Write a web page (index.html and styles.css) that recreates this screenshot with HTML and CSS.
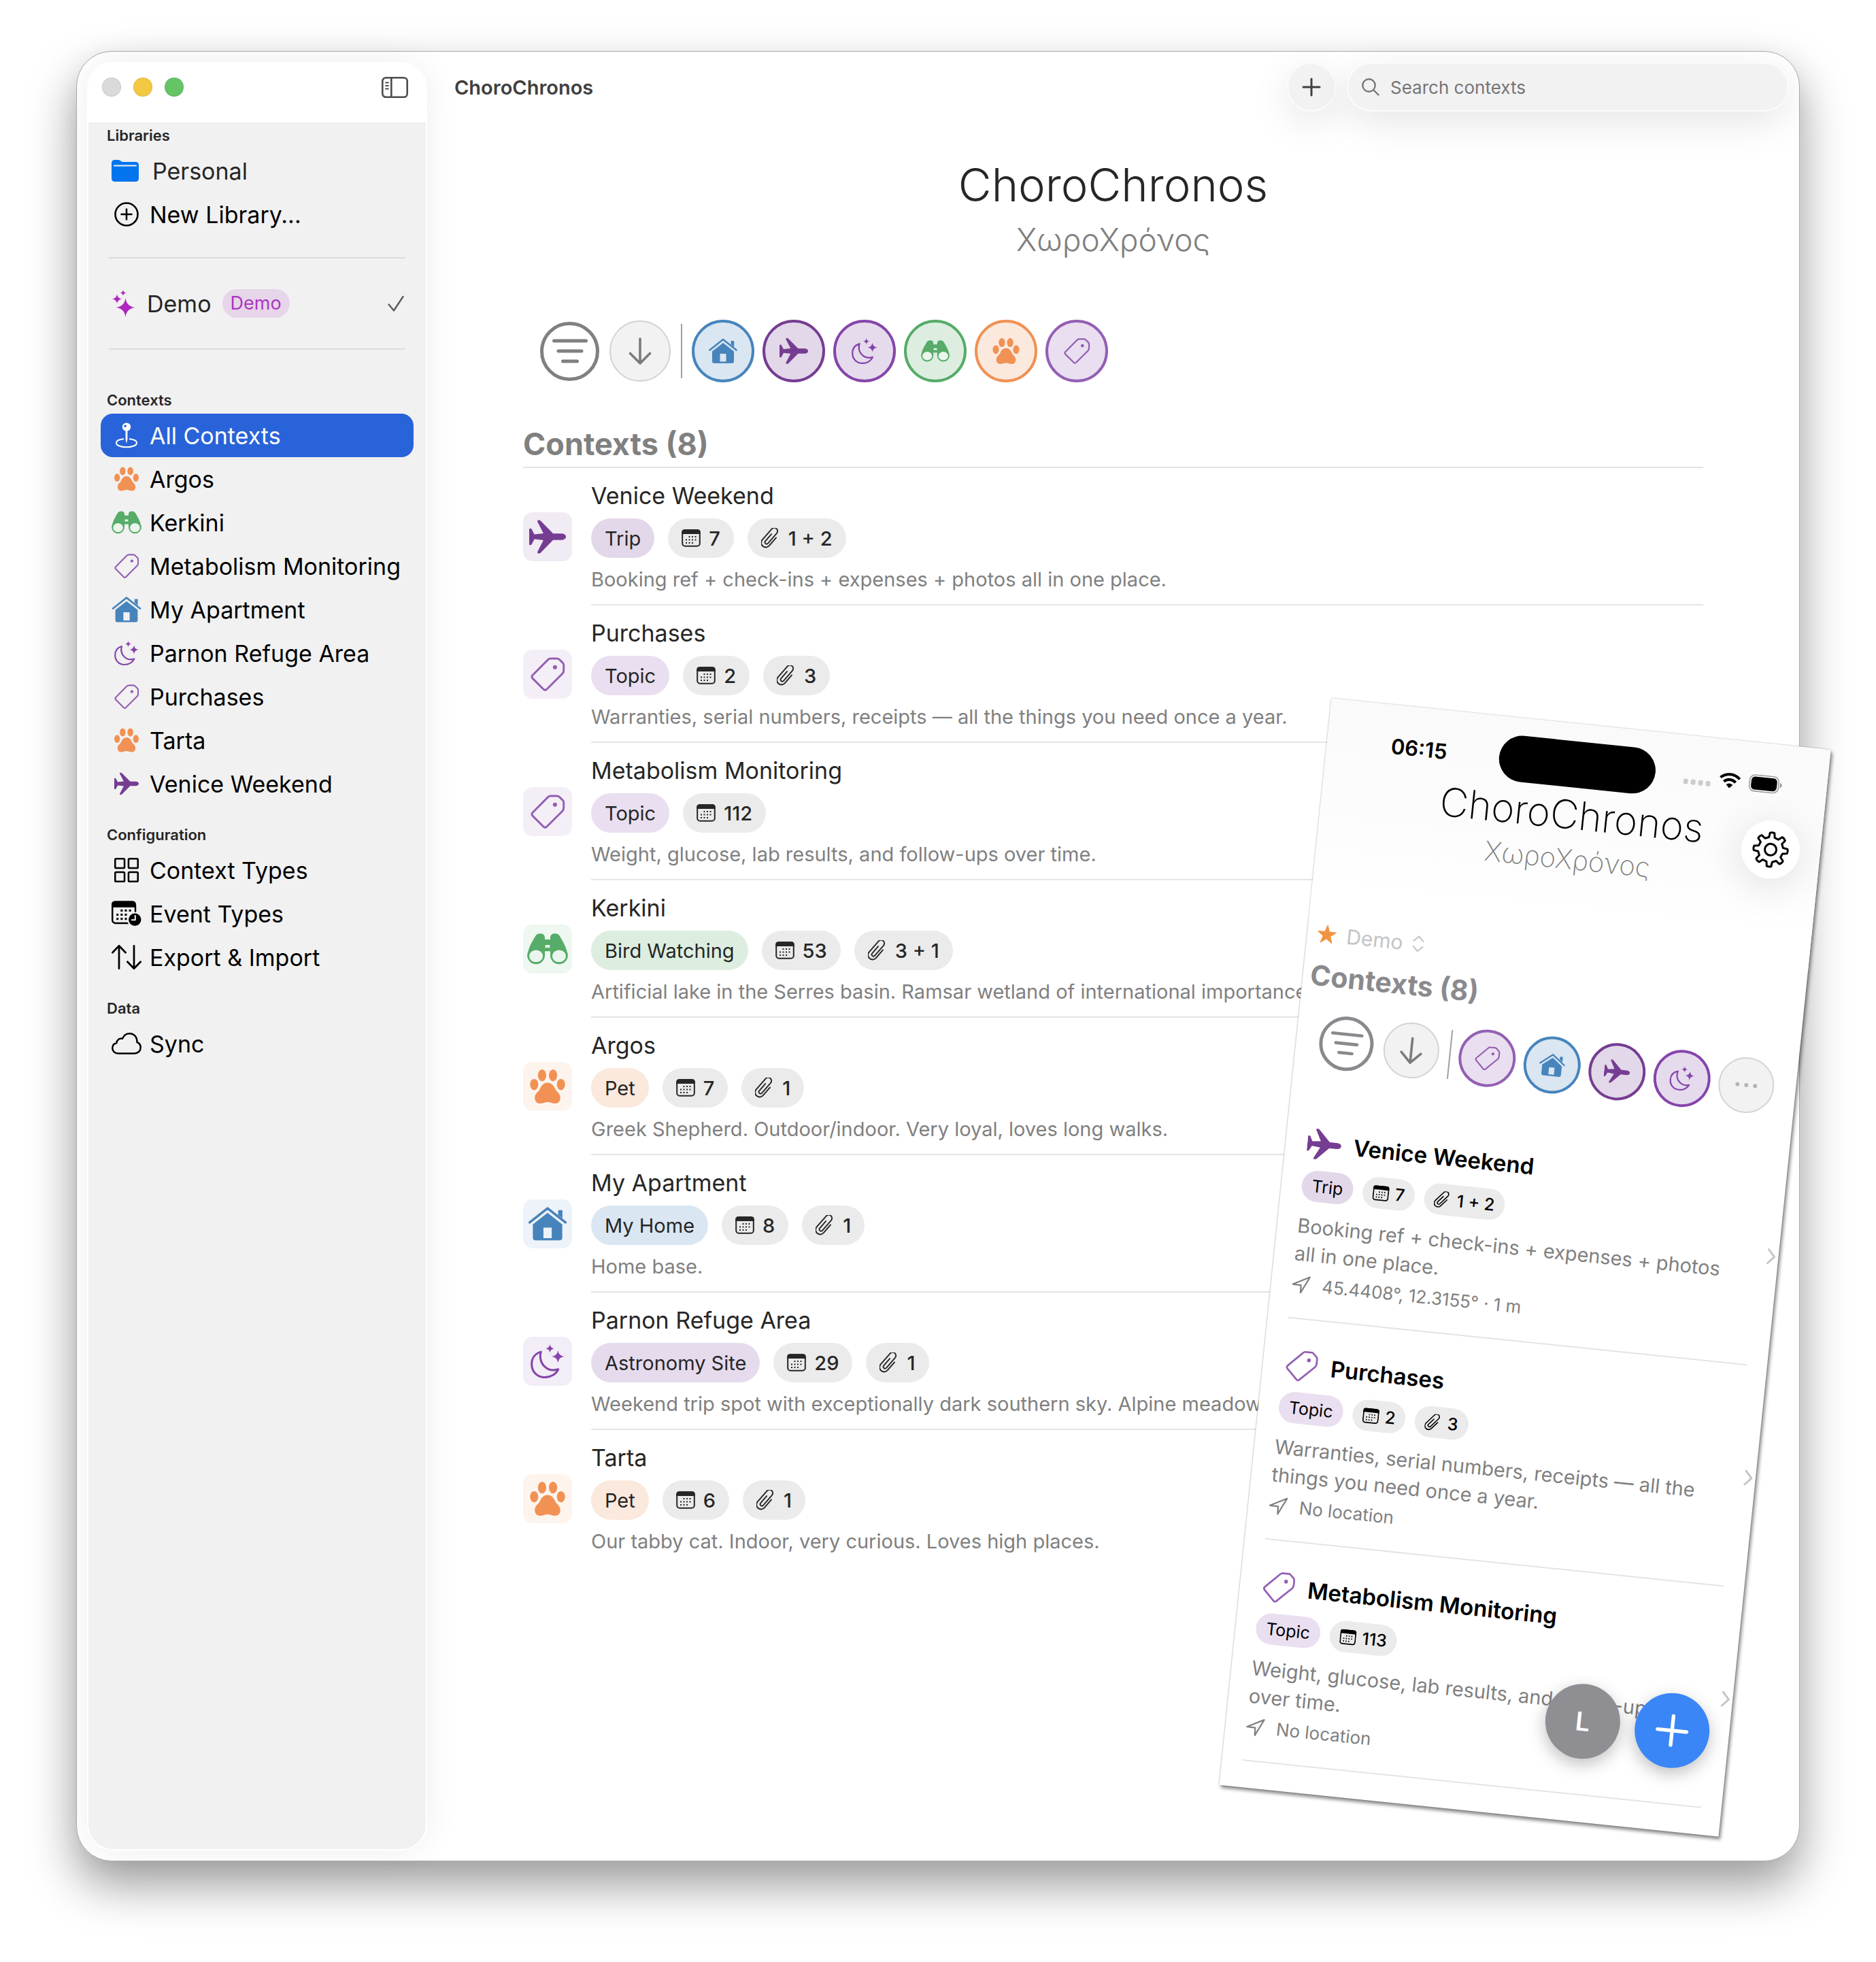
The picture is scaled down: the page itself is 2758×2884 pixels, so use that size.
FILE: index.html
```
<!DOCTYPE html>
<html lang="en">
<head>
    <meta charset="UTF-8">
    <meta name="viewport" content="width=device-width, initial-scale=1.0">
    <title>ChoroChronos</title>
    <link rel="stylesheet" href="styles.css">
</head>
<body>
    <!-- icon set -->
    <svg class="sprite" aria-hidden="true">
        <symbol id="paw" viewBox="0 0 37 36">
            <g fill="currentColor">
                <ellipse cx="4.300" cy="16" rx="4.300" ry="6"/>
                <ellipse cx="12.700" cy="6.200" rx="4.400" ry="6.200"/>
                <ellipse cx="24.300" cy="6.200" rx="4.400" ry="6.200"/>
                <ellipse cx="32.700" cy="16" rx="4.300" ry="6"/>
                <path d="M18.500 14c-4 0-6.500 3-8 6.500C9 24 5 25 5 30c0 4 2.500 6 5.800 6 3 0 4.500-1.500 7.700-1.500s4.700 1.500 7.700 1.500c3.300 0 5.800-2 5.800-6 0-5-4-6-5.500-9.500-1.500-3.500-4-6.500-8-6.500z"/>
            </g>
        </symbol>
        <symbol id="binoculars" viewBox="0 0 45 34">
            <path fill="currentColor" d="M1 20C2.500 14 6 8 9 3c1-2 3-3 5.500-3 3.500 0 5 2 5 4.500v2h6v-2C25.500 2 27 0 30.500 0 33 0 35 1 36 3c3 5 6.500 11 8 17 .6 1.500.9 2.500.9 4a9.700 9.700 0 0 1-19.400 0v-4.500h-6V24A9.700 9.700 0 0 1 .1 24c0-1.500.3-2.500.9-4z"/>
            <g fill="#fff">
                <ellipse cx="9.800" cy="24.800" rx="7.500" ry="6.700" opacity=".88"/>
                <ellipse cx="35.200" cy="24.800" rx="7.500" ry="6.700" opacity=".88"/>
                <path d="M20 12.500h5v3.500q-2.500-1.500-5 0z" opacity=".88"/>
            </g>
        </symbol>
        <symbol id="tag" viewBox="0 0 39 39">
            <path fill="none" stroke="currentColor" stroke-width="2.300" d="M2.500 24.500Q.5 22.500 2.500 20.500L19.800 3Q21.300 1.500 23 1.500h7q1.700 0 2.800 1L36.800 6.300Q38 7.500 38 9v6q0 2.300-1.500 4L18.300 37q-1.600 1.500-3.200 0z"/>
            <circle cx="28" cy="11.500" r="2.400" fill="currentColor"/>
        </symbol>
        <symbol id="house" viewBox="0 0 42 37">
            <path fill="none" stroke="currentColor" stroke-width="2.600" stroke-linecap="round" stroke-linejoin="round" d="M1.500 17 21 1.600 40.500 17"/>
            <path fill="currentColor" d="M32.500 4.500q0-1 1-1h2.700q1 0 1 1v8l-4.700-3.700z"/>
            <path fill="currentColor" fill-rule="evenodd" d="M21 6.500 37 19v14.500q0 3-3 3H8q-3 0-3-3V19zM16.500 22.500V34h9V22.500z"/>
        </symbol>
        <symbol id="moon" viewBox="0 0 36 36">
            <path fill="none" stroke="currentColor" stroke-width="2.200" stroke-linejoin="round" d="M11 8C4 10 1.200 15.500 1.200 21 1.200 29 7 35 15 35c6.500 0 12-3.500 14.300-8.500-4.800 1.500-10.300 1-14.300-2.800C10.300 19.300 9.500 13 11 8z"/>
            <path fill="currentColor" d="M20.500 0q.5 4 4.500 4.500-4 .5-4.500 4.500-.5-4-4.500-4.500 4-.5 4.500-4.500zM29 6.500q.8 5.700 6.500 6.500-5.700.8-6.500 6.500-.8-5.700-6.500-6.500 5.700-.8 6.500-6.500z"/>
        </symbol>
        <symbol id="plane" viewBox="0 0 53 48">
            <path fill="currentColor" d="M53 24c0-3-3-4.700-7-4.700H34.500L17 1.500C16 .5 15 0 13.500 0 12 0 11.500 1 12 2.500L20.500 19 7.500 20.500 3.500 13Q3 12 1.500 12 0 12 0 13.500v21Q0 36 1.500 36q1.500 0 2-1l4-7.500 13 1.500L12 45.500c-.5 1.500 0 2.500 1.500 2.500 1.500 0 2.500-.5 3.500-1.500l17.500-17.800H46c4 0 7-1.700 7-4.700z"/>
        </symbol>
        <symbol id="pin" viewBox="0 0 34 40">
            <circle cx="17" cy="7" r="6.500" fill="currentColor"/>
            <circle cx="15" cy="5.500" r="1.900" fill="#2963d9"/>
            <path fill="currentColor" d="M15.500 12h3v14l-1.500 7-1.500-7z"/>
            <path fill="none" stroke="currentColor" stroke-width="2.200" stroke-linecap="round" d="M12 25.500C5 26.300 1.200 28.500 1.200 31.500c0 4 7 6.700 15.800 6.700s15.800-2.700 15.800-6.700c0-3-3.800-5.200-10.800-6"/>
        </symbol>
        <symbol id="folder" viewBox="0 0 40 32">
            <path fill="currentColor" d="M0 5q0-5 5-5h5q2 0 3.500 1.500L15.500 3H35q5 0 5 5v19q0 5-5 5H5q-5 0-5-5z"/>
            <path stroke="#f1f1f1" stroke-width="2.200" stroke-linecap="round" d="M4 8.500h32"/>
        </symbol>
        <symbol id="plus-circle" viewBox="0 0 36 36">
            <g fill="none" stroke="currentColor" stroke-width="2.600" stroke-linecap="round"><circle cx="18" cy="18" r="16.500"/><path d="M18 10.500v15M10.500 18h15"/></g>
        </symbol>
        <symbol id="sparkles" viewBox="0 0 33 40">
            <path fill="currentColor" d="M19 12q1.500 12.500 14 14-12.500 1.500-14 14-1.500-12.500-14-14 12.500-1.500 14-14zM6.500 6.500q.8 6.200 7 7-6.200.8-7 7-.8-6.200-7-7 6.200-.8 7-7zM15.500 0q.5 4 4.500 4.500-4 .5-4.500 4.500-.5-4-4.500-4.500 4-.5 4.500-4.500z"/>
        </symbol>
        <symbol id="check" viewBox="0 0 24 24">
            <path fill="none" stroke="currentColor" stroke-width="2.400" stroke-linecap="round" stroke-linejoin="round" d="M1.500 13.500 9 22.500 22.500 2"/>
        </symbol>
        <symbol id="sidebar-toggle" viewBox="0 0 39 31">
            <g fill="none" stroke="currentColor" stroke-width="2.600"><rect x="1.300" y="1.300" width="36.400" height="28.400" rx="5"/><path d="M14.300 1v29"/></g>
            <path stroke="currentColor" stroke-width="1.800" stroke-linecap="round" d="M6 8.500h4M6 13h4M6 17.500h4"/>
        </symbol>
        <symbol id="grid" viewBox="0 0 34 34">
            <g fill="none" stroke="currentColor" stroke-width="2.400"><rect x="1.200" y="1.200" width="13" height="13" rx="1.500"/><rect x="19.800" y="1.200" width="13" height="13" rx="1.500"/><rect x="1.200" y="19.800" width="13" height="13" rx="1.500"/><rect x="19.800" y="19.800" width="13" height="13" rx="1.500"/></g>
        </symbol>
        <symbol id="calendar-clock" viewBox="0 0 43 36">
            <rect x="1.200" y="1.200" width="33" height="30.500" rx="4.500" fill="none" stroke="currentColor" stroke-width="2.400"/>
            <path fill="currentColor" d="M0 9V5q0-5 5-5h25q5 0 5 5v4z"/>
            <g fill="currentColor"><rect x="13" y="12" width="3" height="3"/><rect x="19" y="12" width="3" height="3"/><rect x="25" y="12" width="3" height="3"/><rect x="7" y="18" width="3" height="3"/><rect x="13" y="18" width="3" height="3"/><rect x="19" y="18" width="3" height="3"/><rect x="7" y="24" width="3" height="3"/><rect x="13" y="24" width="3" height="3"/><rect x="19" y="24" width="3" height="3"/></g>
            <circle cx="33.500" cy="26.500" r="10" fill="currentColor" stroke="#f1f1f1" stroke-width="2"/>
            <path fill="none" stroke="#f1f1f1" stroke-width="2" stroke-linecap="round" stroke-linejoin="round" d="M34 21v6h-5"/>
        </symbol>
        <symbol id="arrows" viewBox="0 0 42 35">
            <path fill="none" stroke="currentColor" stroke-width="2.600" stroke-linecap="round" stroke-linejoin="round" d="M10.500 33.500v-32M1.300 11l9.200-9.500 9.200 9.500M31.500 1.500v32M22.300 24l9.200 9.500 9.200-9.500"/>
        </symbol>
        <symbol id="cloud" viewBox="0 0 44 32">
            <path fill="none" stroke="currentColor" stroke-width="2.500" stroke-linejoin="round" d="M9.500 30.500C4.500 30.500 1.300 27 1.300 22.700c0-4 2.500-6.700 6-7.400C7.500 11 11.500 7.500 16 8.800 18 4 22 1.300 26.500 1.300c6.500 0 11.500 5.500 11 12.700 3.200 1.200 5.200 4 5.200 7.700 0 5-3.700 8.800-8.700 8.800z"/>
        </symbol>
        <symbol id="calendar" viewBox="0 0 28 26">
            <rect x="1.200" y="1.200" width="25.600" height="23.600" rx="4" fill="none" stroke="currentColor" stroke-width="2"/>
            <path fill="currentColor" d="M.2 7V4.500q0-4.300 4.300-4.300h19q4.300 0 4.300 4.300V7z"/>
            <g fill="currentColor"><rect x="10.500" y="10" width="2" height="2"/><rect x="15" y="10" width="2" height="2"/><rect x="19.500" y="10" width="2" height="2"/><rect x="6" y="14.500" width="2" height="2"/><rect x="10.500" y="14.500" width="2" height="2"/><rect x="15" y="14.500" width="2" height="2"/><rect x="19.500" y="14.500" width="2" height="2"/><rect x="6" y="19" width="2" height="2"/><rect x="10.500" y="19" width="2" height="2"/><rect x="15" y="19" width="2" height="2"/></g>
        </symbol>
        <symbol id="clip" viewBox="0 0 28 30">
            <path transform="rotate(41 13.500 15)" fill="none" stroke="currentColor" stroke-width="1.900" stroke-linecap="round" d="M10.800 9.500V23a2.600 2.600 0 0 0 5.200 0V3.500a4.900 4.900 0 0 0-9.800 0V24.500a6.700 6.700 0 0 0 13.400 0V9"/>
        </symbol>
        <symbol id="filter" viewBox="0 0 52 36">
            <path stroke="currentColor" stroke-width="5" stroke-linecap="round" d="M2.500 3h47M9 18h34M15.500 33h21"/>
        </symbol>
        <symbol id="arrow-down" viewBox="0 0 34 40">
            <path fill="none" stroke="currentColor" stroke-width="3.600" stroke-linecap="round" stroke-linejoin="round" d="M17 2v35M2.500 23.500 17 38l14.500-14.500"/>
        </symbol>
        <symbol id="plus" viewBox="0 0 28 28">
            <path stroke="currentColor" stroke-width="3" stroke-linecap="round" d="M14 2v24M2 14h24"/>
        </symbol>
        <symbol id="search" viewBox="0 0 26 26">
            <g fill="none" stroke="currentColor" stroke-width="2.400" stroke-linecap="round"><circle cx="10.500" cy="10.500" r="9.200"/><path d="M17.500 17.500l7 7"/></g>
        </symbol>
        <symbol id="location" viewBox="0 0 28 28">
            <path fill="none" stroke="currentColor" stroke-width="2.200" stroke-linejoin="round" d="M2 14.500 26 2 14.500 26 14 14.800z"/>
        </symbol>
        <symbol id="chevron" viewBox="0 0 14 26">
            <path fill="none" stroke="currentColor" stroke-width="3" stroke-linecap="round" stroke-linejoin="round" d="M2 2l10 11L2 24"/>
        </symbol>
        <symbol id="chevrons" viewBox="0 0 18 26">
            <path fill="none" stroke="currentColor" stroke-width="2" stroke-linecap="round" stroke-linejoin="round" d="M2 9l7-7 7 7M2 17l7 7 7-7"/>
        </symbol>
        <symbol id="star" viewBox="0 0 30 30">
            <path fill="currentColor" stroke="currentColor" stroke-linejoin="round" d="M15 1.500l3.300 9.700 10.200.1-8.200 6.200 3 9.900-8.300-6-8.300 6 3-9.900L1.500 11.300l10.200-.1z"/>
        </symbol>
        <symbol id="gear" viewBox="-27 -27 54 54">
            <g fill="none" stroke="currentColor" stroke-width="3" stroke-linejoin="round">
                <path d="M-4.200-18-3.300-24.500Q0-26 3.300-24.500L4.200-18 9.800-15.700 15-19.800Q18.500-18.500 19.800-15L15.700-9.800 18-4.200 24.500-3.300Q26 0 24.500 3.300L18 4.200 15.700 9.800 19.800 15Q18.500 18.500 15 19.800L9.800 15.700 4.200 18 3.300 24.500Q0 26-3.300 24.500L-4.200 18-9.800 15.700-15 19.800Q-18.500 18.500-19.800 15L-15.700 9.800-18 4.200-24.500 3.300Q-26 0-24.500-3.300L-18-4.200-15.700-9.800-19.800-15Q-18.500-18.500-15-19.800L-9.800-15.700z"/>
                <circle r="8.500"/>
            </g>
        </symbol>
        <symbol id="wifi" viewBox="0 0 32 24">
            <g fill="none" stroke="currentColor" stroke-width="4"><path d="M1.800 8.800a20.500 20.500 0 0 1 28.400 0"/><path d="M7.300 14.300a12.500 12.500 0 0 1 17.400 0"/></g>
            <path fill="currentColor" d="M16 23.500l-5-5.200q5-4 10 0z"/>
        </symbol>
        <symbol id="battery" viewBox="0 0 50 26">
            <rect x="1" y="1" width="43" height="24" rx="8" fill="none" stroke="#9a9a9a" stroke-width="1.600"/>
            <rect x="3.500" y="3.500" width="38" height="19" rx="5.500" fill="currentColor"/>
            <path fill="#9a9a9a" d="M46 9q3 1.500 3 4t-3 4z"/>
        </symbol>
    </svg>

    <div class="stage">
        <div class="window">
            <aside class="sidebar">
                <div class="titlebar">
                    <span class="light gray"></span>
                    <span class="light yellow"></span>
                    <span class="light green"></span>
                    <button class="toggle" aria-label="Toggle sidebar"><svg><use href="#sidebar-toggle"/></svg></button>
                </div>
                <nav>
                    <h2>Libraries</h2>
                    <a class="library" href="#"><svg class="folder-icon"><use href="#folder"/></svg>Personal</a>
                    <a class="black" href="#"><svg><use href="#plus-circle"/></svg>New Library...</a>
                    <hr>
                    <a class="library demo" href="#"><svg class="sparkle-icon"><use href="#sparkles"/></svg>Demo<span class="badge">Demo</span><svg class="check"><use href="#check"/></svg></a>
                    <hr>

                    <h2 class="spaced">Contexts</h2>
                    <a class="selected" href="#"><svg><use href="#pin"/></svg>All Contexts</a>
                    <a href="#"><svg class="pet"><use href="#paw"/></svg>Argos</a>
                    <a href="#"><svg class="bird wide"><use href="#binoculars"/></svg>Kerkini</a>
                    <a href="#"><svg class="topic"><use href="#tag"/></svg>Metabolism Monitoring</a>
                    <a href="#"><svg class="home wide"><use href="#house"/></svg>My Apartment</a>
                    <a href="#"><svg class="astro"><use href="#moon"/></svg>Parnon Refuge Area</a>
                    <a href="#"><svg class="topic"><use href="#tag"/></svg>Purchases</a>
                    <a href="#"><svg class="pet"><use href="#paw"/></svg>Tarta</a>
                    <a href="#"><svg class="trip"><use href="#plane"/></svg>Venice Weekend</a>

                    <h2 class="spaced">Configuration</h2>
                    <a href="#"><svg><use href="#grid"/></svg>Context Types</a>
                    <a href="#"><svg class="wide"><use href="#calendar-clock"/></svg>Event Types</a>
                    <a href="#"><svg class="wide"><use href="#arrows"/></svg>Export &amp; Import</a>

                    <h2 class="spaced">Data</h2>
                    <a href="#"><svg class="wide"><use href="#cloud"/></svg>Sync</a>
                </nav>
            </aside>

            <main>
                <header class="toolbar">
                    <span class="toolbar-title">ChoroChronos</span>
                    <button class="add" aria-label="Add context"><svg><use href="#plus"/></svg></button>
                    <label class="search">
                        <svg><use href="#search"/></svg>
                        <input type="search" placeholder="Search contexts" aria-label="Search contexts">
                    </label>
                </header>

                <div class="brand">
                    <h1>ChoroChronos</h1>
                    <p lang="el">ΧωροΧρόνος</p>
                </div>

                <div class="content">
                    <div class="filters">
                        <button class="filter" aria-label="Filter"><svg><use href="#filter"/></svg></button>
                        <button class="sort" aria-label="Sort"><svg><use href="#arrow-down"/></svg></button>
                        <span class="divider"></span>
                        <button class="type home" aria-label="My Home"><svg><use href="#house"/></svg></button>
                        <button class="type trip" aria-label="Trip"><svg><use href="#plane"/></svg></button>
                        <button class="type astro" aria-label="Astronomy Site"><svg><use href="#moon"/></svg></button>
                        <button class="type bird" aria-label="Bird Watching"><svg><use href="#binoculars"/></svg></button>
                        <button class="type pet" aria-label="Pet"><svg><use href="#paw"/></svg></button>
                        <button class="type topic" aria-label="Topic"><svg><use href="#tag"/></svg></button>
                    </div>

                    <h2 class="list-title">Contexts (8)</h2>

                    <article class="row trip">
                        <span class="tile"><svg><use href="#plane"/></svg></span>
                        <div class="info">
                            <h3>Venice Weekend</h3>
                            <div class="pills">
                                <span class="pill kind">Trip</span>
                                <span class="pill"><svg><use href="#calendar"/></svg>7</span>
                                <span class="pill"><svg><use href="#clip"/></svg>1 + 2</span>
                            </div>
                            <p>Booking ref + check-ins + expenses + photos all in one place.</p>
                        </div>
                    </article>
                    <article class="row topic">
                        <span class="tile"><svg><use href="#tag"/></svg></span>
                        <div class="info">
                            <h3>Purchases</h3>
                            <div class="pills">
                                <span class="pill kind">Topic</span>
                                <span class="pill"><svg><use href="#calendar"/></svg>2</span>
                                <span class="pill"><svg><use href="#clip"/></svg>3</span>
                            </div>
                            <p>Warranties, serial numbers, receipts — all the things you need once a year.</p>
                        </div>
                    </article>
                    <article class="row topic">
                        <span class="tile"><svg><use href="#tag"/></svg></span>
                        <div class="info">
                            <h3>Metabolism Monitoring</h3>
                            <div class="pills">
                                <span class="pill kind">Topic</span>
                                <span class="pill"><svg><use href="#calendar"/></svg>112</span>
                            </div>
                            <p>Weight, glucose, lab results, and follow-ups over time.</p>
                        </div>
                    </article>
                    <article class="row bird">
                        <span class="tile"><svg class="big"><use href="#binoculars"/></svg></span>
                        <div class="info">
                            <h3>Kerkini</h3>
                            <div class="pills">
                                <span class="pill kind">Bird Watching</span>
                                <span class="pill"><svg><use href="#calendar"/></svg>53</span>
                                <span class="pill"><svg><use href="#clip"/></svg>3 + 1</span>
                            </div>
                            <p>Artificial lake in the Serres basin. Ramsar wetland of international importance</p>
                        </div>
                    </article>
                    <article class="row pet">
                        <span class="tile"><svg><use href="#paw"/></svg></span>
                        <div class="info">
                            <h3>Argos</h3>
                            <div class="pills">
                                <span class="pill kind">Pet</span>
                                <span class="pill"><svg><use href="#calendar"/></svg>7</span>
                                <span class="pill"><svg><use href="#clip"/></svg>1</span>
                            </div>
                            <p>Greek Shepherd. Outdoor/indoor. Very loyal, loves long walks.</p>
                        </div>
                    </article>
                    <article class="row home">
                        <span class="tile"><svg class="big"><use href="#house"/></svg></span>
                        <div class="info">
                            <h3>My Apartment</h3>
                            <div class="pills">
                                <span class="pill kind">My Home</span>
                                <span class="pill"><svg><use href="#calendar"/></svg>8</span>
                                <span class="pill"><svg><use href="#clip"/></svg>1</span>
                            </div>
                            <p>Home base.</p>
                        </div>
                    </article>
                    <article class="row astro">
                        <span class="tile"><svg><use href="#moon"/></svg></span>
                        <div class="info">
                            <h3>Parnon Refuge Area</h3>
                            <div class="pills">
                                <span class="pill kind">Astronomy Site</span>
                                <span class="pill"><svg><use href="#calendar"/></svg>29</span>
                                <span class="pill"><svg><use href="#clip"/></svg>1</span>
                            </div>
                            <p>Weekend trip spot with exceptionally dark southern sky. Alpine meadow</p>
                        </div>
                    </article>
                    <article class="row pet">
                        <span class="tile"><svg><use href="#paw"/></svg></span>
                        <div class="info">
                            <h3>Tarta</h3>
                            <div class="pills">
                                <span class="pill kind">Pet</span>
                                <span class="pill"><svg><use href="#calendar"/></svg>6</span>
                                <span class="pill"><svg><use href="#clip"/></svg>1</span>
                            </div>
                            <p>Our tabby cat. Indoor, very curious. Loves high places.</p>
                        </div>
                    </article>
                </div>
            </main>
        </div>

        <!-- phone screen laid over the desktop window -->
        <section class="phone">
            <div class="phone-top">
                <div class="status">
                    <span class="time">06:15</span>
                    <span class="island"></span>
                    <span class="signals">
                        <span class="dots"><i></i><i></i><i></i><i></i></span>
                        <svg class="wifi"><use href="#wifi"/></svg>
                        <svg class="battery"><use href="#battery"/></svg>
                    </span>
                </div>
                <h1>ChoroChronos</h1>
                <p lang="el">ΧωροΧρόνος</p>
                <button class="settings" aria-label="Settings"><svg><use href="#gear"/></svg></button>
            </div>

            <button class="switcher"><svg class="star"><use href="#star"/></svg>Demo<svg class="updown"><use href="#chevrons"/></svg></button>
            <h2 class="phone-title">Contexts (8)</h2>

            <div class="filters compact">
                <button class="filter" aria-label="Filter"><svg><use href="#filter"/></svg></button>
                <button class="sort" aria-label="Sort"><svg><use href="#arrow-down"/></svg></button>
                <span class="divider"></span>
                <button class="type topic" aria-label="Topic"><svg><use href="#tag"/></svg></button>
                <button class="type home" aria-label="My Home"><svg><use href="#house"/></svg></button>
                <button class="type trip" aria-label="Trip"><svg><use href="#plane"/></svg></button>
                <button class="type astro" aria-label="Astronomy Site"><svg><use href="#moon"/></svg></button>
                <button class="sort more" aria-label="More types"><i></i><i></i><i></i></button>
            </div>

            <article class="card trip">
                <div class="card-main">
                    <h3><svg><use href="#plane"/></svg>Venice Weekend</h3>
                    <div class="pills">
                        <span class="pill kind">Trip</span>
                        <span class="pill"><svg><use href="#calendar"/></svg>7</span>
                        <span class="pill"><svg><use href="#clip"/></svg>1 + 2</span>
                    </div>
                    <p>Booking ref + check-ins + expenses + photos<br>all in one place.</p>
                    <div class="place"><svg><use href="#location"/></svg>45.4408°, 12.3155° · 1 m</div>
                </div>
                <svg class="chevron"><use href="#chevron"/></svg>
            </article>
            <article class="card topic">
                <div class="card-main">
                    <h3><svg><use href="#tag"/></svg>Purchases</h3>
                    <div class="pills">
                        <span class="pill kind">Topic</span>
                        <span class="pill"><svg><use href="#calendar"/></svg>2</span>
                        <span class="pill"><svg><use href="#clip"/></svg>3</span>
                    </div>
                    <p>Warranties, serial numbers, receipts — all the<br>things you need once a year.</p>
                    <div class="place"><svg><use href="#location"/></svg>No location</div>
                </div>
                <svg class="chevron"><use href="#chevron"/></svg>
            </article>
            <article class="card topic">
                <div class="card-main">
                    <h3><svg><use href="#tag"/></svg>Metabolism Monitoring</h3>
                    <div class="pills">
                        <span class="pill kind">Topic</span>
                        <span class="pill"><svg><use href="#calendar"/></svg>113</span>
                    </div>
                    <p>Weight, glucose, lab results, and follow-ups<br>over time.</p>
                    <div class="place"><svg><use href="#location"/></svg>No location</div>
                </div>
                <svg class="chevron"><use href="#chevron"/></svg>
            </article>

            <div class="actions">
                <button class="fab">L</button>
                <button class="fab primary" aria-label="Add"><svg><use href="#plus"/></svg></button>
            </div>
        </section>
    </div>
</body>
</html>
```
FILE: styles.css
```
* {
    box-sizing: border-box;
}
body {
    margin: 0;
    background: #fff;
    color: #262626;
    font-family: Inter, "Liberation Sans", sans-serif;
}
h1, h2, h3, p {
    margin: 0;
}
button {
    padding: 0;
    border: none;
    background: none;
    color: inherit;
    font-family: inherit;
    cursor: pointer;
}
svg {
    display: block;
    flex: none;
    overflow: visible;
}
.sprite {
    position: absolute;
    width: 0;
    height: 0;
}

/* one colour set for each context type */
.trip {
    --main: #753d92;
    --soft: #e3d8e9;
    --faint: #f1ebf4;
}
.topic {
    --main: #935fb3;
    --soft: #e9dff0;
    --faint: #f4eff7;
}
.astro {
    --main: #8545aa;
    --soft: #e5dbed;
    --faint: #f2edf6;
}
.bird {
    --main: #56ac68;
    --soft: #ddeee1;
    --faint: #eef7f0;
}
.pet {
    --main: #f19153;
    --soft: #fbe9dd;
    --faint: #fdf4ee;
}
.home {
    --main: #4784bc;
    --soft: #dae6f2;
    --faint: #edf3f9;
}

.stage {
    position: relative;
    display: flex;
    min-height: 100vh;
    padding: 75px 112px 148px;
    overflow: hidden;
}
.window {
    display: flex;
    flex: 1;
    padding: 15px 0 15px 15px;
    border: 1px solid #aaa;
    border-radius: 52px;
    background: #fff;
    box-shadow: 0 34px 70px rgba(0, 0, 0, 0.4);
}

/* sidebar */
.sidebar {
    width: 500px;
    flex: none;
    border: 2px solid #fff;
    border-radius: 38px;
    background: #f1f1f1;
    box-shadow: 0 0 50px rgba(0, 0, 0, 0.07);
}
.titlebar {
    display: flex;
    align-items: center;
    gap: 18px;
    height: 87px;
    padding: 0 26px 17px 20px;
    border-radius: 36px 36px 0 0;
    background: #fff;
}
.light {
    width: 28px;
    height: 28px;
    border: 1px solid rgba(0, 0, 0, 0.08);
    border-radius: 50%;
}
.gray { background: #dadada; }
.yellow { background: #f3c843; }
.green { background: #65c466; }
.toggle {
    margin-left: auto;
    color: #4c4c4c;
}
.toggle svg {
    width: 39px;
    height: 31px;
}
.sidebar nav {
    padding: 0 18px;
}
.sidebar h2 {
    padding-left: 9px;
    font-size: 22px;
    font-weight: 600;
    line-height: 39px;
}
.sidebar h2.spaced {
    padding-top: 24px;
}
.sidebar a {
    display: flex;
    align-items: center;
    gap: 16px;
    height: 64px;
    padding-left: 20px;
    border-radius: 18px;
    color: #000;
    font-size: 34px;
    text-decoration: none;
    white-space: nowrap;
}
.sidebar a svg {
    width: 36px;
    height: 38px;
    color: var(--main, currentColor);
}
.sidebar a svg.wide {
    width: 44px;
    margin: 0 -4px;
}
.sidebar a.selected {
    background: #2963d9;
    color: #fff;
}
.sidebar a.library {
    padding-left: 16px;
    color: #262626;
}
.sidebar a .folder-icon {
    width: 40px;
    margin-right: 4px;
    color: #0274ed;
}
.sidebar a.demo {
    height: 70px;
    padding-right: 14px;
}
.sidebar a .sparkle-icon {
    height: 40px;
    color: #b025c0;
}
.badge {
    padding: 0 12px;
    border-radius: 21px;
    background: #e7d5ea;
    color: #aa38bf;
    font-size: 27px;
    line-height: 42px;
}
.sidebar a .check {
    width: 24px;
    height: 24px;
    margin-left: auto;
    color: #5c5c5c;
}
.sidebar hr {
    height: 2px;
    margin: 31px 12px;
    border: none;
    background: #dcdcdc;
}

/* main pane */
main {
    flex: 1;
    min-width: 0;
}
.toolbar {
    display: flex;
    align-items: center;
    gap: 16px;
    height: 74px;
    padding: 0 15px 0 40px;
}
.toolbar-title {
    margin-right: auto;
    color: #404040;
    font-size: 29px;
    font-weight: 600;
}
.add, .search {
    height: 72px;
    border: 2px solid #fbfbfb;
    border-radius: 36px;
    background: #f2f2f2;
    box-shadow: 0 16px 56px rgba(0, 0, 0, 0.1);
}
.add {
    display: grid;
    place-items: center;
    width: 72px;
    color: #404040;
}
.add svg {
    width: 28px;
    height: 28px;
}
.search {
    display: flex;
    align-items: center;
    gap: 16px;
    width: 650px;
    padding: 0 20px;
    color: #777;
}
.search svg {
    width: 26px;
    height: 26px;
}
.search input {
    flex: 1;
    min-width: 0;
    padding: 0;
    border: none;
    outline: none;
    background: none;
    color: #404040;
    font-family: inherit;
    font-size: 26px;
}
.search input::placeholder {
    color: #757575;
    opacity: 1;
}
.brand {
    padding-top: 62px;
    text-align: center;
}
.brand h1 {
    font-size: 67px;
    font-weight: 300;
    line-height: 90px;
}
.brand p {
    color: #808080;
    font-size: 46px;
    font-weight: 300;
    line-height: 70px;
}
.content {
    padding: 0 141px;
}

/* round filter buttons */
.filters {
    display: flex;
    align-items: center;
    gap: 12px;
    height: 92px;
    margin-top: 83px;
    padding-left: 25px;
}
.filters button {
    display: grid;
    flex: none;
    place-items: center;
    border-radius: 50%;
}
.filters .filter {
    width: 87px;
    height: 87px;
    margin-right: 3px;
    border: 5px solid #808080;
    color: #808080;
}
.filters .filter svg {
    width: 52px;
    height: 36px;
}
.filters .sort {
    width: 90px;
    height: 90px;
    margin-right: 3px;
    border: 2px solid #d4d4d4;
    background: #f2f2f2;
    color: #7b7b7b;
}
.filters .sort svg {
    width: 34px;
    height: 40px;
}
.divider {
    width: 2px;
    height: 80px;
    margin-right: 2px;
    background: #a0a0a0;
}
.filters .type {
    width: 92px;
    height: 92px;
    border: 4px solid var(--main);
    background: var(--soft);
    color: var(--main);
}
.filters .type svg {
    width: 42px;
    height: 38px;
}
.list-title {
    height: 77px;
    margin-top: 49px;
    border-bottom: 2px solid #e3e3e3;
    color: #808080;
    font-size: 45px;
    font-weight: 700;
    line-height: 84px;
}

/* context rows */
.row {
    display: flex;
    align-items: center;
    gap: 28px;
}
.tile {
    display: grid;
    flex: none;
    place-items: center;
    width: 72px;
    height: 72px;
    border-radius: 14px;
    background: var(--faint);
    color: var(--main);
}
.tile svg {
    width: 54px;
    height: 50px;
}
.tile svg.big {
    width: 60px;
}
.info {
    flex: 1;
    min-width: 0;
    padding: 19px 0 16px;
    border-bottom: 2px solid #e5e5e5;
    white-space: nowrap;
}
.row:last-child .info {
    border-bottom-color: transparent;
}
.info h3 {
    font-size: 34px;
    font-weight: 400;
    line-height: 44px;
}
.pills {
    display: flex;
    gap: 20px;
}
.info .pills {
    margin: 11px 0 12px;
}
.pill {
    display: flex;
    align-items: center;
    gap: 12px;
    height: 58px;
    padding: 0 20px;
    border-radius: 29px;
    background: #ebebeb;
    font-size: 29px;
    font-weight: 500;
}
.pill.kind {
    background: var(--soft);
    font-weight: 400;
}
.pill svg {
    width: 28px;
    height: 30px;
}
.info p {
    color: #808080;
    font-size: 29px;
    line-height: 40px;
}

/* phone */
.phone {
    position: absolute;
    right: 147px;
    bottom: 218px;
    width: 738px;
    padding-bottom: 39px;
    background: #fff;
    box-shadow: 0 0 2px rgba(0, 0, 0, 0.4), 3px 4px 5px rgba(0, 0, 0, 0.45);
    color: #000;
    transform: rotate(5.9deg);
}
.phone-top {
    position: relative;
    height: 326px;
    padding-top: 26px;
    background: linear-gradient(#fafafa, #fcfcfc 50%, #fff 85%);
    text-align: center;
}
.status {
    display: grid;
    grid-template-columns: 1fr 231px 1fr;
    align-items: center;
}
.time {
    padding-left: 18px;
    font-size: 31px;
    font-weight: 600;
}
.island {
    height: 68px;
    border-radius: 34px;
    background: #000;
}
.signals {
    display: flex;
    align-items: center;
    gap: 12px;
    padding-left: 42px;
}
.dots {
    display: flex;
    gap: 4px;
    padding-top: 16px;
}
.dots i {
    width: 7px;
    height: 8px;
    border-radius: 3px;
    background: #ccc;
}
.wifi {
    width: 32px;
    height: 24px;
}
.battery {
    width: 50px;
    height: 26px;
}
.phone h1 {
    margin-top: 6px;
    font-size: 58px;
    font-weight: 200;
    line-height: 68px;
}
.phone-top p {
    margin-top: 4px;
    color: #808080;
    font-size: 40px;
    font-weight: 200;
    line-height: 56px;
}
.settings {
    position: absolute;
    top: 112px;
    right: 30px;
    display: grid;
    place-items: center;
    width: 86px;
    height: 86px;
    border-radius: 50%;
    background: #fff;
    box-shadow: 0 10px 60px rgba(0, 0, 0, 0.12);
}
.settings svg {
    width: 54px;
    height: 54px;
}
.switcher {
    display: flex;
    align-items: center;
    gap: 14px;
    height: 40px;
    margin-left: 14px;
    color: #c4c4c6;
    font-size: 30px;
}
.star {
    width: 30px;
    height: 30px;
    color: #f19340;
}
.updown {
    width: 18px;
    height: 26px;
}
.phone-title {
    margin-top: 15px;
    padding-left: 11px;
    color: #8a8a8e;
    font-size: 41px;
    line-height: 52px;
}
.filters.compact {
    height: 84px;
    margin-top: 28px;
    padding-left: 34px;
}
.compact .filter {
    width: 80px;
    height: 80px;
    border-color: #8a8a8e;
    color: #8a8a8e;
}
.compact .filter svg {
    width: 48px;
}
.compact .sort {
    width: 82px;
    height: 82px;
}
.compact .divider {
    height: 72px;
    margin-right: 0;
}
.compact .type {
    width: 84px;
    height: 84px;
}
.compact .type svg {
    width: 38px;
    height: 36px;
}
.compact .more {
    grid-auto-flow: column;
    place-content: center;
    gap: 7px;
}
.more i {
    width: 6px;
    height: 6px;
    border-radius: 50%;
    background: #b4b4b4;
}
.card {
    display: flex;
    align-items: center;
    justify-content: space-between;
    padding: 0 4px 0 30px;
}
.compact + .card {
    margin-top: 41px;
}
.card-main {
    width: 678px;
    padding: 44px 0 32px;
    border-bottom: 2px solid #e5e5e5;
}
.card h3 {
    display: flex;
    align-items: center;
    gap: 18px;
    padding-left: 2px;
    font-size: 33px;
    font-weight: 600;
    line-height: 48px;
}
.card h3 svg {
    width: 50px;
    height: 46px;
    color: var(--main);
}
.card .pills {
    gap: 14px;
    margin: 15px 0 16px;
}
.card .pill {
    gap: 9px;
    height: 46px;
    padding: 0 15px;
    font-size: 25px;
}
.card .pill svg {
    width: 24px;
    height: 25px;
}
.card p {
    color: #808080;
    font-size: 29px;
    line-height: 41px;
    white-space: nowrap;
}
.place {
    display: flex;
    align-items: center;
    gap: 17px;
    margin-top: 8px;
    color: #808080;
    font-size: 26px;
    line-height: 34px;
}
.place svg {
    width: 28px;
    height: 28px;
}
.chevron {
    width: 13px;
    height: 24px;
    color: #c4c4c6;
}
.actions {
    position: absolute;
    right: 29px;
    bottom: 93px;
    display: flex;
    gap: 22px;
}
.fab {
    display: grid;
    place-items: center;
    width: 110px;
    height: 110px;
    border-radius: 50%;
    background: #8e8e93;
    box-shadow: 0 8px 24px rgba(0, 0, 0, 0.25);
    color: #fff;
    font-size: 38px;
    font-weight: 600;
}
.fab.primary {
    background: #3a86f7;
}
.fab svg {
    width: 50px;
    height: 50px;
}
```
